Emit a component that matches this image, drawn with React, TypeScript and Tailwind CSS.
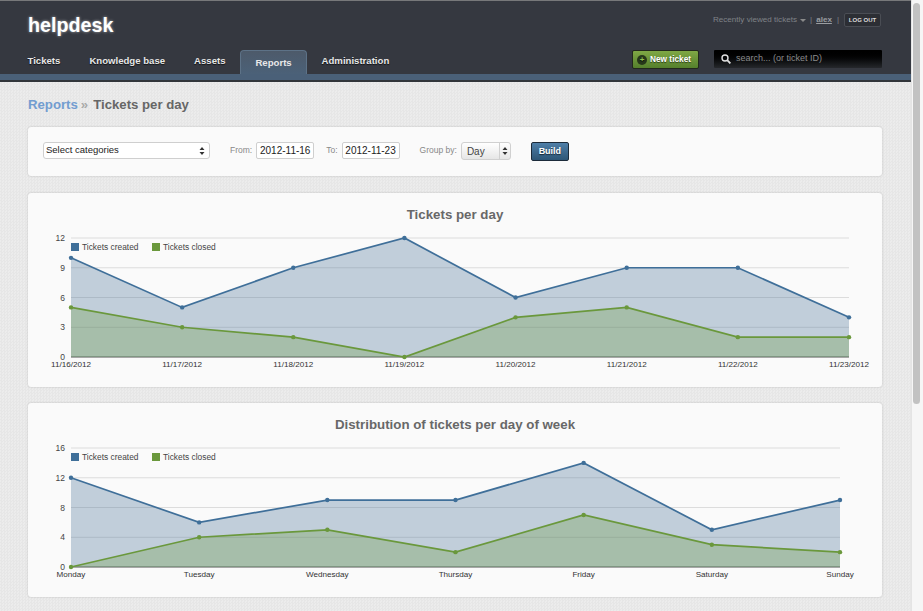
import React from "react";

const font = "[font-family:'Liberation_Sans',Arial,sans-serif]";

type ChartProps = {
  title: string;
  plotRight: number;
  max: number;
  ticks: number[];
  labels: string[];
  created: number[];
  closed: number[];
};

function Chart({ title, plotRight, max, ticks, labels, created, closed }: ChartProps) {
  const left = 43;
  const top = 15;
  const bottom = 134;
  const step = (plotRight - left) / (labels.length - 1);
  const px = (i: number) => left + i * step;
  const py = (v: number) => bottom - (v / max) * (bottom - top);
  const line = (d: number[]) => d.map((v, i) => `${px(i)},${py(v)}`).join(" ");
  const area = (d: number[]) => `${left},${bottom} ${line(d)} ${plotRight},${bottom}`;
  return (
    <section className="mb-[16px] h-[194px] rounded-[3px] bg-[#fafafa] shadow-[0_0_2px_rgba(0,0,0,0.22)]">
      <h2 className="pt-[14px] text-center text-[13.3px] font-bold leading-[16px] text-[#686868]">{title}</h2>
      <svg width="854" height="160" viewBox="0 0 854 160" className="block">
        {ticks.map((t) => (
          <g key={t}>
            <line x1={left} x2={plotRight} y1={py(t)} y2={py(t)} stroke={t === 0 ? "#555" : "#dcdcdc"} strokeWidth="1" />
            <text x={left - 6} y={py(t) + 3} textAnchor="end" fontSize="8.5" fill="#444">{t}</text>
          </g>
        ))}
        <polygon points={area(created)} fill="#446f96" fillOpacity="0.31" />
        <polygon points={area(closed)} fill="#6a983c" fillOpacity="0.3" />
        <polyline points={line(created)} fill="none" stroke="#3f6f99" strokeWidth="1.7" />
        <polyline points={line(closed)} fill="none" stroke="#6a983c" strokeWidth="1.7" />
        {created.map((v, i) => <circle key={i} cx={px(i)} cy={py(v)} r="2.2" fill="#3f6f99" />)}
        {closed.map((v, i) => <circle key={i} cx={px(i)} cy={py(v)} r="2.2" fill="#6a983c" />)}
        <rect x={left} y={20} width="8" height="8" fill="#3f6f99" />
        <text x={left + 11} y={27} fontSize="8.4" fill="#444">Tickets created</text>
        <rect x={left + 81} y={20} width="8" height="8" fill="#6a983c" />
        <text x={left + 92} y={27} fontSize="8.4" fill="#444">Tickets closed</text>
        {labels.map((l, i) => (
          <text key={l} x={px(i)} y={bottom + 9.5} textAnchor="middle" fontSize="8.1" fill="#333">{l}</text>
        ))}
      </svg>
    </section>
  );
}

function Arrows() {
  return (
    <svg width="6" height="8" viewBox="0 0 6 8" className="block">
      <path d="M3 0 L5.5 3 H0.5 Z M3 8 L0.5 5 H5.5 Z" fill="#333" />
    </svg>
  );
}

export default function App() {
  const navCls = "px-[14.5px] pt-[4px] text-[9.6px] font-bold text-[#e8e8e8] leading-[14px] [text-shadow:0_1px_1px_rgba(0,0,0,0.7)]";
  const inputCls = "flex h-[17px] w-[58px] items-center justify-center rounded-[2px] border border-[#cfcfcf] bg-white text-[10px] text-[#222]";
  return (
    <div className={`flex h-[611px] w-[923px] overflow-hidden ${font}`}>
      <div className="h-full w-[911px] shrink-0 overflow-hidden bg-[repeating-conic-gradient(#e6e6e6_0_25%,#ececec_0_50%)] bg-[length:3px_3px]">
        <header className="border-t border-[#77787a] bg-[#353840]">
          <div className="flex h-[49px] items-start justify-between pl-[28px] pr-[30px]">
            <div className="pt-[11px] text-[19.7px] font-bold leading-[26px] text-white [text-shadow:0_0_3px_rgba(255,255,255,0.6)]">helpdesk</div>
            <div className="flex items-center pt-[12px] text-[8.1px] text-[#7f8287]">
              <span>Recently viewed tickets</span>
              <span className="ml-[3px] mt-[1px] h-0 w-0 border-x-[3px] border-t-[3px] border-x-transparent border-t-[#8a8a8a]" />
              <span className="mx-[4px]">|</span>
              <span className="font-bold text-[#9a9da1] underline">alex</span>
              <span className="mx-[5px]">|</span>
              <span className="flex h-[14px] w-[37px] items-center justify-center rounded-[2px] border border-[#4a4d54] bg-[#2c2e34] text-[6px] font-bold text-[#dddddd]">LOG OUT</span>
            </div>
          </div>
          <div className="flex h-[24px] items-start justify-between pl-[13px] pr-[29px]">
            <nav className="flex items-start">
              <a className={navCls}>Tickets</a>
              <a className={navCls}>Knowledge base</a>
              <a className={navCls}>Assets</a>
              <a className="h-[24px] w-[67px] rounded-t-[4px] border-x border-t border-[#5d7287] bg-gradient-to-b from-[#4d5a6a] to-[#4b6178] pt-[5px] text-center text-[9.6px] font-bold leading-[14px] text-[#e8e8e8]">Reports</a>
              <a className={navCls}>Administration</a>
            </nav>
            <div className="flex items-start">
              <button className="flex h-[19px] w-[67px] items-center rounded-[2px] border border-[#22281c] bg-gradient-to-b from-[#7fa845] to-[#55802c] pl-[4px] text-[8.3px] font-bold text-white [text-shadow:0_1px_1px_rgba(0,0,0,0.6)]">
                <span className="mr-[3px] flex h-[10px] w-[10px] items-center justify-center rounded-full bg-[#27381a] text-[8px] leading-none text-[#8fc04f]">+</span>
                New ticket
              </button>
              <div className="ml-[15px] flex h-[18px] w-[168px] items-center rounded-[1px] bg-gradient-to-b from-[#000000] to-[#26282c] pl-[7px] text-[9px] text-[#8a8a8a]">
                <svg width="10" height="10" viewBox="0 0 10 10" className="mr-[5px] shrink-0">
                  <circle cx="4" cy="4" r="3" fill="none" stroke="#e0e0e0" strokeWidth="1.4" />
                  <line x1="6.2" y1="6.2" x2="9.4" y2="9.4" stroke="#e0e0e0" strokeWidth="1.8" />
                </svg>
                search... (or ticket ID)
              </div>
            </div>
          </div>
          <div className="h-[8px] border-b-2 border-[#32363b] bg-[#4a6078]" />
        </header>

        <main className="pl-[28px] pr-[29px] pt-[14px]">
          <div className="mb-[14px] flex h-[17px] items-center text-[13.2px] font-bold leading-[17px]">
            <span className="text-[#729dd0]">Reports</span>
            <span className="ml-[3px] mr-[5px] text-[#aaa]">»</span>
            <span className="text-[#666]">Tickets per day</span>
          </div>

          <section className="mb-[17px] flex h-[49px] items-start rounded-[3px] bg-[#fafafa] pl-[15px] pt-[15px] text-[8.5px] text-[#888] shadow-[0_0_2px_rgba(0,0,0,0.22)]">
            <div className="flex h-[17px] w-[167px] items-center justify-between rounded-[3px] border border-[#cfcfcf] bg-white pl-[2px] pr-[4px] text-[9.5px] text-[#222]">
              Select categories
              <Arrows />
            </div>
            <span className="ml-[20px] mr-[4px] leading-[17px]">From:</span>
            <div className={inputCls}>2012-11-16</div>
            <span className="ml-[12px] mr-[4px] leading-[17px]">To:</span>
            <div className={inputCls}>2012-11-23</div>
            <span className="ml-[20px] mr-[4px] leading-[17px]">Group by:</span>
            <div className="flex h-[18px] w-[50px] items-center overflow-hidden rounded-[3px] border border-[#d0d0d0] bg-gradient-to-b from-white to-[#e6e6e6] text-[10px] text-[#444]">
              <span className="w-[37px] pl-[5px]">Day</span>
              <span className="flex h-full flex-1 items-center justify-center border-l border-[#d0d0d0]"><Arrows /></span>
            </div>
            <button className="ml-[20px] h-[19px] w-[38px] rounded-[2px] border border-[#1c2b3a] bg-gradient-to-b from-[#4f7fa8] to-[#2e5676] text-[9px] font-bold text-white [text-shadow:0_1px_1px_rgba(0,0,0,0.6)]">Build</button>
          </section>

          <Chart
            title="Tickets per day"
            plotRight={821}
            max={12}
            ticks={[12, 9, 6, 3, 0]}
            labels={["11/16/2012", "11/17/2012", "11/18/2012", "11/19/2012", "11/20/2012", "11/21/2012", "11/22/2012", "11/23/2012"]}
            created={[10, 5, 9, 12, 6, 9, 9, 4]}
            closed={[5, 3, 2, 0, 4, 5, 2, 2]}
          />
          <Chart
            title="Distribution of tickets per day of week"
            plotRight={812}
            max={16}
            ticks={[16, 12, 8, 4, 0]}
            labels={["Monday", "Tuesday", "Wednesday", "Thursday", "Friday", "Saturday", "Sunday"]}
            created={[12, 6, 9, 9, 14, 5, 9]}
            closed={[0, 4, 5, 2, 7, 3, 2]}
          />
        </main>
      </div>
      <div className="h-full flex-1 border-l border-[#e4e4e4] bg-[#f6f6f6] pl-[1px] pt-[3px]">
        <div className="h-[401px] w-[7px] rounded-[4px] bg-[#c2c2c2]" />
      </div>
    </div>
  );
}
